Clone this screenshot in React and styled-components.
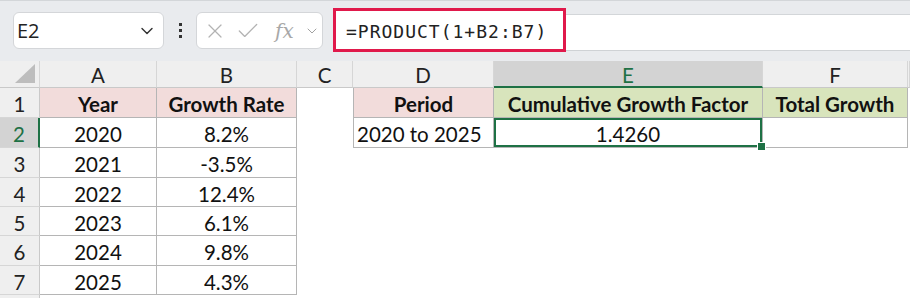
import React from 'react';
import styled, { createGlobalStyle } from 'styled-components';
import { X, Check, ChevronDown } from 'lucide-react';

const GlobalStyle = createGlobalStyle`
  html, body {
    margin: 0;
    padding: 0;
    background: #ffffff;
    font-family: Lato, "Noto Sans", sans-serif;
  }
`;

const COLS = ['A', 'B', 'C', 'D', 'E', 'F', ''];
const WIDTHS = '40px 117px 140px 56px 141px 269px 145px 1fr';
const ROW_HEIGHTS = [30, 30, 30, 29, 29, 30, 29, 10];

const growth = [
  ['2020', '8.2%'],
  ['2021', '-3.5%'],
  ['2022', '12.4%'],
  ['2023', '6.1%'],
  ['2024', '9.8%'],
  ['2025', '4.3%'],
];

const App = () => {
  const rows = [];
  for (let r = 1; r <= 8; r++) {
    const data = r === 1 ? ['Year', 'Growth Rate'] : growth[r - 2];
    rows.push(
      <React.Fragment key={r}>
        <RowHead $active={r === 2}>{r <= 7 ? r : ''}</RowHead>
        {r <= 7 ? (
          <>
            <Cell $boxed $fill={r === 1 ? 'pink' : null} $bold={r === 1}>{data[0]}</Cell>
            <Cell $boxed $fill={r === 1 ? 'pink' : null} $bold={r === 1}>{data[1]}</Cell>
          </>
        ) : (
          <>
            <Cell />
            <Cell />
          </>
        )}
        <Cell />
        {r === 1 && (
          <>
            <Cell $boxed $leftEdge $fill="pink" $bold>Period</Cell>
            <Cell $boxed $fill="green" $bold>Cumulative Growth Factor</Cell>
            <Cell $boxed $fill="green" $bold>Total Growth</Cell>
          </>
        )}
        {r === 2 && (
          <>
            <Cell $boxed $leftEdge $align="left">2020 to 2025</Cell>
            <Cell $boxed $selected>
              1.4260
              <FillHandle />
            </Cell>
            <Cell $boxed />
          </>
        )}
        {r > 2 && (
          <>
            <Cell />
            <Cell />
            <Cell />
          </>
        )}
        <Cell />
      </React.Fragment>
    );
  }

  return (
    <Page>
      <GlobalStyle />
      <Toolbar>
        <NameBox>
          <span>E2</span>
          <ChevronDown size={20} strokeWidth={1.7} color="#333" />
        </NameBox>
        <Dots>
          <i />
          <i />
          <i />
        </Dots>
        <FnBox>
          <X size={24} strokeWidth={1.2} color="#b3b3b3" />
          <Check size={26} strokeWidth={1.2} color="#b3b3b3" />
          <Fx>fx</Fx>
          <ChevronDown size={16} strokeWidth={1.4} color="#9a9a9a" />
        </FnBox>
        <FormulaBar>
          <Highlight>=PRODUCT(1+B2:B7)</Highlight>
        </FormulaBar>
      </Toolbar>
      <Sheet>
        <Corner>
          <svg width="20" height="19" viewBox="0 0 20 19">
            <polygon points="20,0 20,19 0,19" fill="#bdbdbd" />
          </svg>
        </Corner>
        {COLS.map(c => (
          <ColHead key={c || 'G'} $active={c === 'E'}>{c}</ColHead>
        ))}
        {rows}
      </Sheet>
    </Page>
  );
};

const Page = styled.div`
  width: 910px;
  height: 298px;
  overflow: hidden;
  background: #ffffff;
`;

const Toolbar = styled.div`
  height: 61px;
  box-sizing: border-box;
  display: flex;
  align-items: flex-start;
  padding: 12px 0 0 13px;
  background: #e9ebee;
  border-top: 1px solid #d3d6d9;
`;

const NameBox = styled.div`
  width: 151px;
  height: 37px;
  box-sizing: border-box;
  margin-top: -1px;
  display: flex;
  align-items: center;
  justify-content: space-between;
  padding: 0 6px 0 3px;
  background: #ffffff;
  border: 1px solid #d4d6d9;
  border-radius: 6px;
  font-family: "Open Sans", "Noto Sans", sans-serif;
  font-size: 20px;
  color: #222;
`;

const Dots = styled.div`
  width: 3px;
  height: 37px;
  margin: -1px 14px 0 15px;
  display: flex;
  flex-direction: column;
  justify-content: center;
  gap: 3px;

  i {
    display: block;
    width: 3px;
    height: 3px;
    background: #333;
  }
`;

const FnBox = styled.div`
  width: 127px;
  height: 37px;
  box-sizing: border-box;
  margin-top: -1px;
  display: flex;
  align-items: center;
  gap: 8px;
  padding: 0 2px 0 6px;
  background: #ffffff;
  border: 1px solid #d4d6d9;
  border-radius: 6px;

  svg:last-child {
    margin-left: auto;
  }
`;

const Fx = styled.span`
  font-family: "DejaVu Serif", "Liberation Serif", serif;
  font-style: italic;
  font-size: 20px;
  color: #a8a8a8;
  margin-left: 6px;
`;

const FormulaBar = styled.div`
  flex: 1;
  height: 37px;
  box-sizing: border-box;
  margin-left: 10px;
  margin-top: 1px;
  background: #ffffff;
  border-top: 1px solid #d3d6d9;
  border-bottom: 1px solid #cfd2d5;
`;

const Highlight = styled.div`
  width: 233px;
  height: 44px;
  box-sizing: border-box;
  margin-top: -7px;
  display: flex;
  align-items: center;
  padding: 2px 0 0 10px;
  border: 3px solid #e0194b;
  background: #ffffff;
  font-family: "DejaVu Sans Mono", monospace;
  font-size: 18px;
  letter-spacing: 1px;
  color: #222;
`;

const Sheet = styled.div`
  display: grid;
  grid-template-columns: ${WIDTHS};
  grid-template-rows: 27px ${ROW_HEIGHTS.map(h => h + 'px').join(' ')};
  background: #ffffff;
  font-family: Lato, "Noto Sans", sans-serif;
  font-size: 20.5px;
  color: #111;
`;

const Corner = styled.div`
  background: #efefef;
  border-right: 1px solid #d6d6d6;
  border-bottom: 1px solid #c9c9c9;
  display: flex;
  align-items: flex-end;
  justify-content: flex-end;
  padding: 0 4px 4px 0;
`;

const ColHead = styled.div`
  display: flex;
  align-items: center;
  justify-content: center;
  padding-top: 2px;
  background: ${p => (p.$active ? '#d3d3d3' : '#efefef')};
  color: ${p => (p.$active ? '#1e7145' : '#222')};
  border-right: 1px solid #d6d6d6;
  border-bottom: ${p => (p.$active ? '2px solid #1e7145' : '1px solid #c9c9c9')};
`;

const RowHead = styled.div`
  display: flex;
  align-items: center;
  justify-content: center;
  padding-top: 3px;
  background: ${p => (p.$active ? '#d3d3d3' : '#efefef')};
  color: ${p => (p.$active ? '#1e7145' : '#222')};
  border-right: ${p => (p.$active ? '2px solid #1e7145' : '1px solid #c9c9c9')};
  border-bottom: 1px solid #d6d6d6;
`;

const FILLS = {
  pink: '#f2dcdb',
  green: '#d8e4bc',
};

const Cell = styled.div`
  position: relative;
  display: flex;
  align-items: center;
  justify-content: ${p => (p.$align === 'left' ? 'flex-start' : 'center')};
  padding: ${p => (p.$align === 'left' ? '3px 0 0 3px' : '3px 0 0 0')};
  white-space: nowrap;
  font-weight: ${p => (p.$bold ? 700 : 400)};
  background: ${p => (p.$fill ? FILLS[p.$fill] : '#ffffff')};
  border-right: ${p => (p.$boxed ? '1px solid #b5b5b5' : 'none')};
  border-bottom: ${p => (p.$boxed ? '1px solid #b5b5b5' : 'none')};
  border-left: ${p => (p.$leftEdge ? '1px solid #b5b5b5' : 'none')};
  box-shadow: ${p => (p.$selected ? 'inset 0 0 0 2px #1e7145' : 'none')};
`;

const FillHandle = styled.span`
  position: absolute;
  right: -4px;
  bottom: -4px;
  width: 7px;
  height: 7px;
  background: #1e7145;
  border: 1px solid #ffffff;
  z-index: 2;
`;

export default App;
